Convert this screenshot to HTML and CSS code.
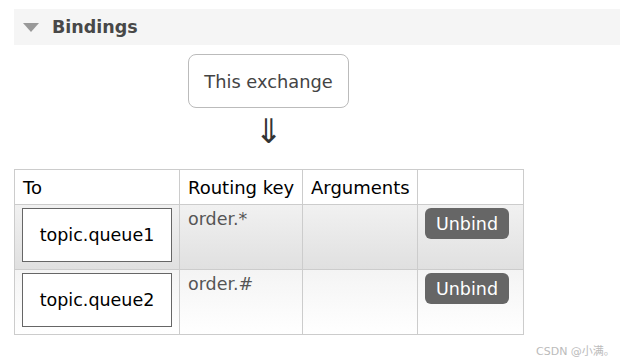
FILE: index.html
```html
<!DOCTYPE html>
<html>
<head>
<meta charset="utf-8">
<link rel="stylesheet" href="styles.css">
</head>
<body>
<div class="page">
  <div class="section-head">
    <span class="tri"></span>
    <h2 class="title">Bindings</h2>
  </div>
  <div class="flow">
    <div class="exchange">This exchange</div>
    <div class="arrow">⇓</div>
  </div>
  <table class="bindings">
    <colgroup>
      <col class="c-to">
      <col class="c-key">
      <col class="c-args">
      <col class="c-act">
    </colgroup>
    <thead>
      <tr>
        <th>To</th>
        <th>Routing key</th>
        <th>Arguments</th>
        <th></th>
      </tr>
    </thead>
    <tbody>
      <tr class="alt1">
        <td><div class="queue">topic.queue1</div></td>
        <td class="key">order.*</td>
        <td></td>
        <td><button class="unbind">Unbind</button></td>
      </tr>
      <tr class="alt2">
        <td><div class="queue">topic.queue2</div></td>
        <td class="key">order.#</td>
        <td></td>
        <td><button class="unbind">Unbind</button></td>
      </tr>
    </tbody>
  </table>
  <div class="watermark">CSDN @小满。</div>
</div>
</body>
</html>
```

FILE: styles.css
```css
html, body {
  margin: 0;
  padding: 0;
  background: #fff;
}
body {
  font-family: "DejaVu Sans", Verdana, sans-serif;
  font-size: 17.5px;
  color: #000;
}
.page {
  padding: 9px 0 0 14px;
  width: 606px;
}
.section-head {
  display: flex;
  align-items: center;
  height: 36px;
  background: #f5f5f5;
}
.tri {
  width: 0;
  height: 0;
  margin-left: 9px;
  border-left: 8px solid transparent;
  border-right: 8px solid transparent;
  border-top: 9px solid #999;
}
.title {
  margin: 0 0 0 13px;
  font-size: 17.5px;
  font-weight: bold;
  color: #484848;
}
.flow {
  margin-left: 174px;
  width: 161px;
  display: flex;
  flex-direction: column;
  align-items: center;
}
.exchange {
  box-sizing: border-box;
  margin-top: 9px;
  width: 161px;
  height: 54px;
  border: 1px solid #bbb;
  border-radius: 8px;
  display: flex;
  align-items: center;
  justify-content: center;
  color: #444;
  font-size: 17.8px;
}
.arrow {
  font-size: 34px;
  line-height: 40px;
  height: 40px;
  margin-top: 3px;
  color: #333;
}
.bindings {
  margin-top: 18px;
  border-collapse: collapse;
  table-layout: fixed;
  width: 510px;
}
.c-to { width: 165px; }
.c-key { width: 123px; }
.c-args { width: 115px; }
.c-act { width: 106px; }
.bindings th, .bindings td {
  box-sizing: border-box;
  border: 1px solid #ccc;
  padding: 0;
  vertical-align: top;
  text-align: left;
}
.bindings th {
  font-weight: normal;
  height: 35px;
  vertical-align: middle;
  padding-left: 8px;
  font-size: 18px;
}
.bindings tbody td {
  height: 65px;
}
.alt1 { background: linear-gradient(#f1f1f1, #e0e0e0); }
.alt2 { background: linear-gradient(#f4f4f4, #ffffff); }
.queue {
  margin: 3px 7px 0 7px;
  height: 52px;
  border: 1px solid #666;
  background: #fff;
  display: flex;
  align-items: center;
  justify-content: center;
}
.bindings td.key {
  padding: 4px 0 0 8px;
  color: #555;
}
.unbind {
  margin: 3px 0 0 7px;
  height: 31px;
  width: 84px;
  border: none;
  border-radius: 6px;
  background: #666;
  color: #fff;
  font-family: "DejaVu Sans", Verdana, sans-serif;
  font-size: 17.5px;
  padding: 0;
}
.watermark {
  margin: 10px 0 0 522px;
  font-size: 11px;
  line-height: 13px;
  color: #bbb;
  font-family: "DejaVu Sans", "Noto Sans CJK SC", sans-serif;
}
```
